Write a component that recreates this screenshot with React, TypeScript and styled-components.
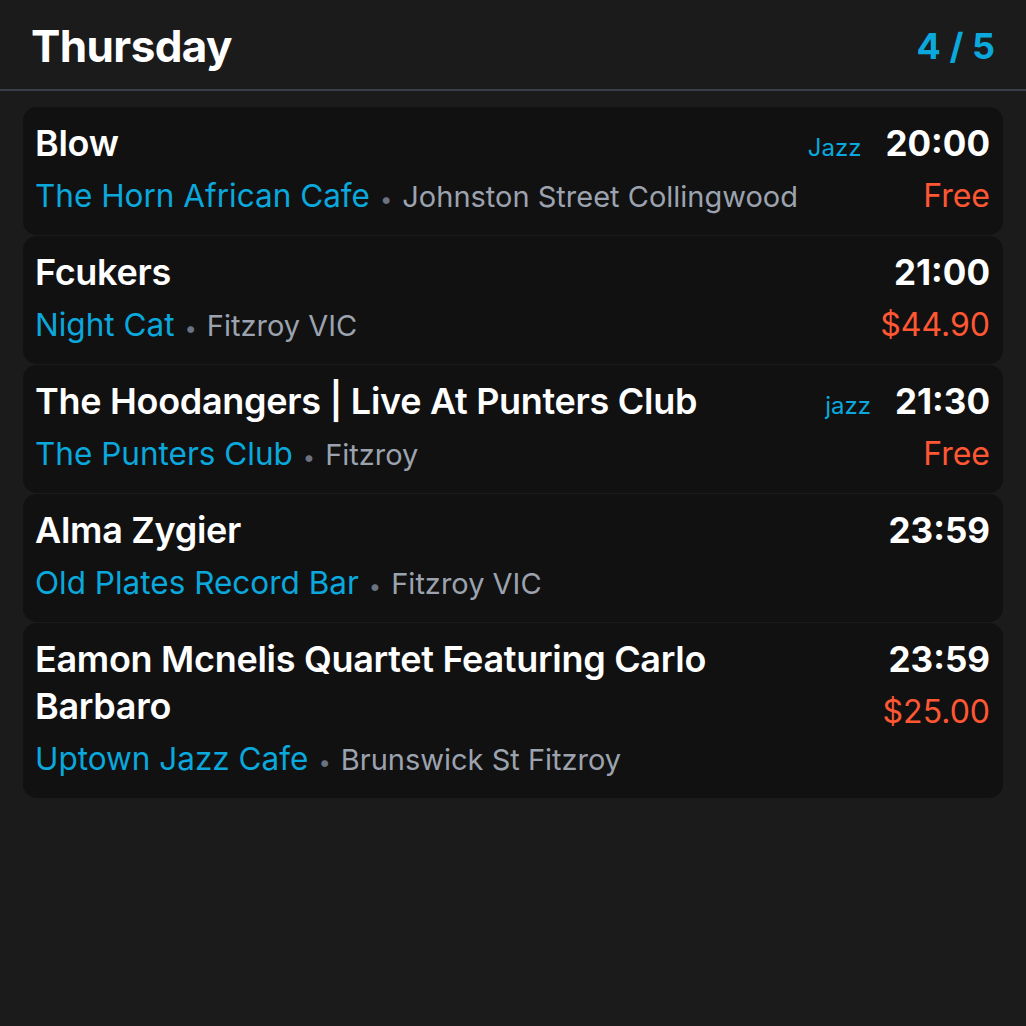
import styled, { createGlobalStyle } from 'styled-components'

const GlobalStyle = createGlobalStyle`
    html, body {
        margin: 0;
        padding: 0;
        background: #1b1b1b;
        font-family: Inter, "Noto Sans", sans-serif;
    }
`

const Page = styled.div`
    width: 1026px;
    min-height: 1026px;
    background: #1b1b1b;
    color: #fff;
`

const Header = styled.header`
    height: 91px;
    display: flex;
    align-items: center;
    justify-content: space-between;
    padding: 2px 31px 0 31px;
    box-sizing: border-box;
    border-bottom: 2px solid #3a3f49;
`

const Day = styled.h1`
    margin: 0;
    font-size: 44px;
    font-weight: 700;
    letter-spacing: -0.6px;
`

const Counter = styled.span`
    font-size: 36px;
    font-weight: 700;
    color: #0aa8dc;
`

const List = styled.div`
    display: flex;
    flex-direction: column;
    gap: 1px;
    padding: 16px 23px;
`

const Card = styled.div`
    display: flex;
    gap: 40px;
    background: #111111;
    border-radius: 14px;
    padding: 13px 13px 19px 12px;
`

const Info = styled.div`
    flex: 1;
    min-width: 0;
`

const Title = styled.div`
    font-size: 36px;
    font-weight: 600;
    line-height: 47px;
    letter-spacing: -0.3px;
`

const VenueLine = styled.div`
    margin-top: 9px;
    font-size: 31.5px;
    line-height: 40px;
    height: 40px;
    white-space: nowrap;
`

const Venue = styled.span`
    color: #0aa8dc;
`

const Dot = styled.span`
    color: #6b7280;
    font-size: 22px;
    line-height: 1;
    margin: 0 10px;
`

const Place = styled.span`
    color: #9ca3af;
    font-size: 29px;
`

const Side = styled.div`
    display: flex;
    flex-direction: column;
    align-items: flex-end;
`

const TimeRow = styled.div`
    display: flex;
    align-items: baseline;
    gap: 24px;
`

const Tag = styled.span`
    font-size: 24px;
    color: #0aa8dc;
`

const Time = styled.span`
    font-size: 35px;
    font-weight: 700;
    line-height: 47px;
`

const Price = styled.div`
    margin-top: 9px;
    font-size: 32px;
    line-height: 40px;
    color: #ff5733;
`

interface Gig {
    title: string
    venue: string
    place: string
    time: string
    price?: string
    tag?: string
}

const gigs: Gig[] = [
    { title: 'Blow', venue: 'The Horn African Cafe', place: 'Johnston Street Collingwood', time: '20:00', price: 'Free', tag: 'Jazz' },
    { title: 'Fcukers', venue: 'Night Cat', place: 'Fitzroy VIC', time: '21:00', price: '$44.90' },
    { title: 'The Hoodangers | Live At Punters Club', venue: 'The Punters Club', place: 'Fitzroy', time: '21:30', price: 'Free', tag: 'jazz' },
    { title: 'Alma Zygier', venue: 'Old Plates Record Bar', place: 'Fitzroy VIC', time: '23:59' },
    { title: 'Eamon Mcnelis Quartet Featuring Carlo Barbaro', venue: 'Uptown Jazz Cafe', place: 'Brunswick St Fitzroy', time: '23:59', price: '$25.00' },
]

export default function App() {
    return (
        <Page>
            <GlobalStyle />
            <Header>
                <Day>Thursday</Day>
                <Counter>4 / 5</Counter>
            </Header>
            <List>
                {gigs.map((g, i) => (
                    <Card key={i}>
                        <Info>
                            <Title>{g.title}</Title>
                            <VenueLine>
                                <Venue>{g.venue}</Venue>
                                <Dot>•</Dot>
                                <Place>{g.place}</Place>
                            </VenueLine>
                        </Info>
                        <Side>
                            <TimeRow>
                                {g.tag && <Tag>{g.tag}</Tag>}
                                <Time>{g.time}</Time>
                            </TimeRow>
                            {g.price && <Price>{g.price}</Price>}
                        </Side>
                    </Card>
                ))}
            </List>
        </Page>
    )
}
